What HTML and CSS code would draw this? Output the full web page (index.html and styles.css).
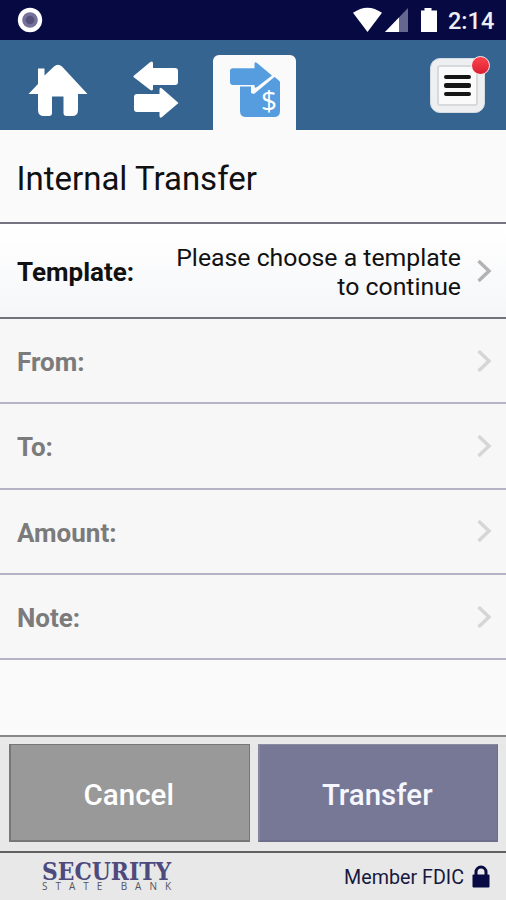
FILE: index.html
```html
<!DOCTYPE html>
<html lang="en">
<head>
<meta charset="utf-8">
<title>Internal Transfer</title>
<link rel="stylesheet" href="styles.css">
</head>
<body>
<div class="app">
  <div class="status">
    <svg class="record" width="26" height="26" viewBox="0 0 26 26"><circle cx="13" cy="13" r="12.2" fill="#fff"/><circle cx="13" cy="13" r="7.8" fill="#74719a"/><circle cx="13" cy="13" r="4.3" fill="#55517c"/></svg>
    <svg width="84" height="28" viewBox="0 0 84 28">
      <path d="M0 6.8Q14.500-3.500 29 6.800L14.500 26Z" fill="#fff"/>
      <path d="M55 2V26H32Z" fill="#666790"/><path d="M46 11.400V26H32Z" fill="#fff"/>
      <path d="M71.500 2h7v2.500H84V26H68V4.500h3.500Z" fill="#fff"/>
    </svg>
    <span class="clock">2:14</span>
  </div>
  <header class="nav">
    <svg class="home" width="60" height="53" viewBox="0 0 60 53"><path d="M10 20V4.500h6.500v7L26 2.500q4-3.500 8 0L59.500 30H50V46q0 6-6 6h-5.500q-3 0-3-3V32.500H24V49q0 3-3 3H16q-6 0-6-6V30H.5Z" fill="#fff"/></svg>
    <svg class="swap" width="46" height="58" viewBox="0 0 46 58" fill="#fff"><path d="M.5 15 17 1.200Q20-.8 20 2.500V7H42q3 0 3 3V21q0 3-3 3H20v3.500q0 3-3 1.200L.5 16Z"/><path d="M45.500 42 29 56Q26.500 58 26.500 54.500V51H4q-3 0-3-3V36q0-3 3-3H26.500V29q0-3.500 2.500-1.500Z"/></svg>
    <div class="tab">
      <svg width="52" height="58" viewBox="0 0 52 58"><path d="M11 13H43q8 6 8 7V49q0 6-6 6H17q-6 0-6-6V13Z" fill="#569de0"/><path d="M25.500-1 46 14.500 25 32 22 31V24.500H0V4H25Z" fill="#fafafb"/><path d="M4 6.200H25.500V2q0-3 2.500-1L43 13.500 28 25q-2.500 2-2.500-1v-1H4q-3 0-3-3V9q0-2.800 3-2.800Z" fill="#569de0"/><text x="40" y="48.500" text-anchor="middle" font-family="Open Sans" font-size="28" fill="#fff">$</text></svg>
    </div>
    <div class="menu"><div class="menu-face"><i></i><i></i><i></i></div><b class="badge"></b></div>
  </header>
  <h1>Internal Transfer</h1>
  <main>
    <div class="row active"><strong>Template:</strong><span>Please choose a template<br>to continue</span><svg class="chev" width="15" height="24" viewBox="0 0 15 24"><path d="M1.500 2 12 12 1.500 22"/></svg></div>
    <div class="row"><strong>From:</strong><svg class="chev" width="15" height="24" viewBox="0 0 15 24"><path d="M1.500 2 12 12 1.500 22"/></svg></div>
    <div class="row"><strong>To:</strong><svg class="chev" width="15" height="24" viewBox="0 0 15 24"><path d="M1.500 2 12 12 1.500 22"/></svg></div>
    <div class="row"><strong>Amount:</strong><svg class="chev" width="15" height="24" viewBox="0 0 15 24"><path d="M1.500 2 12 12 1.500 22"/></svg></div>
    <div class="row"><strong>Note:</strong><svg class="chev" width="15" height="24" viewBox="0 0 15 24"><path d="M1.500 2 12 12 1.500 22"/></svg></div>
  </main>
  <div class="actions"><button class="cancel">Cancel</button><button class="transfer">Transfer</button></div>
  <footer>
    <svg class="brand" width="132" height="32" viewBox="0 0 132 32"><text x="1" y="19.500" textLength="129" lengthAdjust="spacingAndGlyphs" font-family="DejaVu Serif" font-weight="700" font-size="24" fill="#4d4a7d">SECURITY</text><text x="1" y="29.500" textLength="129" font-family="Open Sans" font-size="10" fill="#55555f">STATE BANK</text></svg>
    <div class="member"><span>Member FDIC</span><svg width="18" height="23" viewBox="0 0 18 23"><path d="M4 11V7a5 5 0 0 1 10 0v4" fill="none" stroke="#080a43" stroke-width="3"/><rect x=".5" y="9.500" width="17" height="13" rx="1" fill="#080a43"/></svg></div>
  </footer>
</div>
</body>
</html>
```
FILE: styles.css
```css
* { box-sizing: border-box; }
body { margin: 0; font-family: Roboto, sans-serif; }
.app { width: 506px; height: 900px; display: flex; flex-direction: column; background: #fafafb; overflow: hidden; }
.status { height: 40px; flex: none; display: flex; align-items: center; padding: 0 12px 0 17px; background: #070a42; }
.record { margin-right: auto; }
.clock { width: 46px; margin-left: 11px; color: #eeeef6; font-size: 23.500px; font-weight: 500; line-height: 40px; padding-top: 2px; white-space: nowrap; }
.nav { height: 90px; flex: none; display: flex; align-items: flex-start; padding-left: 28px; background: #356491; }
.home { margin-top: 24px; }
.swap { margin: 21px 0 0 45px; }
.tab { width: 83px; height: 75px; margin: 15px 0 0 34px; border-radius: 6px 6px 0 0; background: #fafafb; padding: 7px 0 0 16px; }
.menu { position: relative; width: 55px; height: 55px; margin: 18px 0 0 134px; padding: 6px; border-radius: 10px; background: #eeeff1; border: 1px solid #d4dbe2; }
.menu-face { height: 41px; border: 2px solid #d8d9db; border-radius: 3px; background: #fafafa; display: flex; flex-direction: column; align-items: center; justify-content: center; gap: 4px; }
.menu-face i { width: 27px; height: 4.500px; border-radius: 2px; background: #151515; }
.badge { position: absolute; width: 19px; height: 19px; right: -6px; top: -3px; border-radius: 50%; border: 1.500px solid #f8e8ec; background: linear-gradient(#ff424b, #d91f34); }
h1 { height: 94px; flex: none; margin: 0; padding: 3px 16.500px 0; border-bottom: 2px solid #747581; color: #111; font-size: 33px; font-weight: 400; line-height: 92px; }
main { height: 511px; flex: none; }
.row { height: 85.300px; display: flex; align-items: center; padding: 4px 14px 0 17px; border-bottom: 2px solid #b4b4c6; background: #f7f7f7; color: #7b7b7b; font-size: 26px; line-height: 29px; }
.row.active { height: 95px; border-color: #71727b; background: linear-gradient(#fff, #f5f6f8); color: #111; }
.row strong { font-weight: 700; }
.row span { margin-left: auto; text-align: right; white-space: nowrap; font-size: 24.800px; padding-bottom: 1px; }
.chev { margin: 0 0 4px auto; fill: none; stroke: #d6d6d6; stroke-width: 3.500; }
.active .chev { margin-left: 16px; stroke: #b3b3b5; }
.actions { height: 118px; flex: none; display: flex; gap: 8px; padding: 7px 8px 9px 9px; border-top: 2px solid #858788; border-bottom: 2px solid #606261; background: #e8e8e8; }
button { flex: 1; border: 1px solid #777; border-left-width: 2px; border-bottom-width: 2px; color: #fff; font: 500 29.500px Roboto, sans-serif; padding: 5px 2px 0 0; }
.cancel { background: #999; }
.transfer { background: #777895; border-color: #8a8ba0 #6d6e8b #6d6e8b #85869c; color: #f6f6ff; }
footer { flex: 1; display: flex; justify-content: space-between; align-items: flex-start; padding: 7px 16px 0 41px; background: #e8e8e8; }
.brand { overflow: visible; }
.member { display: flex; align-items: center; gap: 8px; padding-top: 5px; color: #17183f; font-size: 19.700px; line-height: 24px; }
.member span { padding-top: 1px; }
.member svg { margin-top: -2px; }
```
